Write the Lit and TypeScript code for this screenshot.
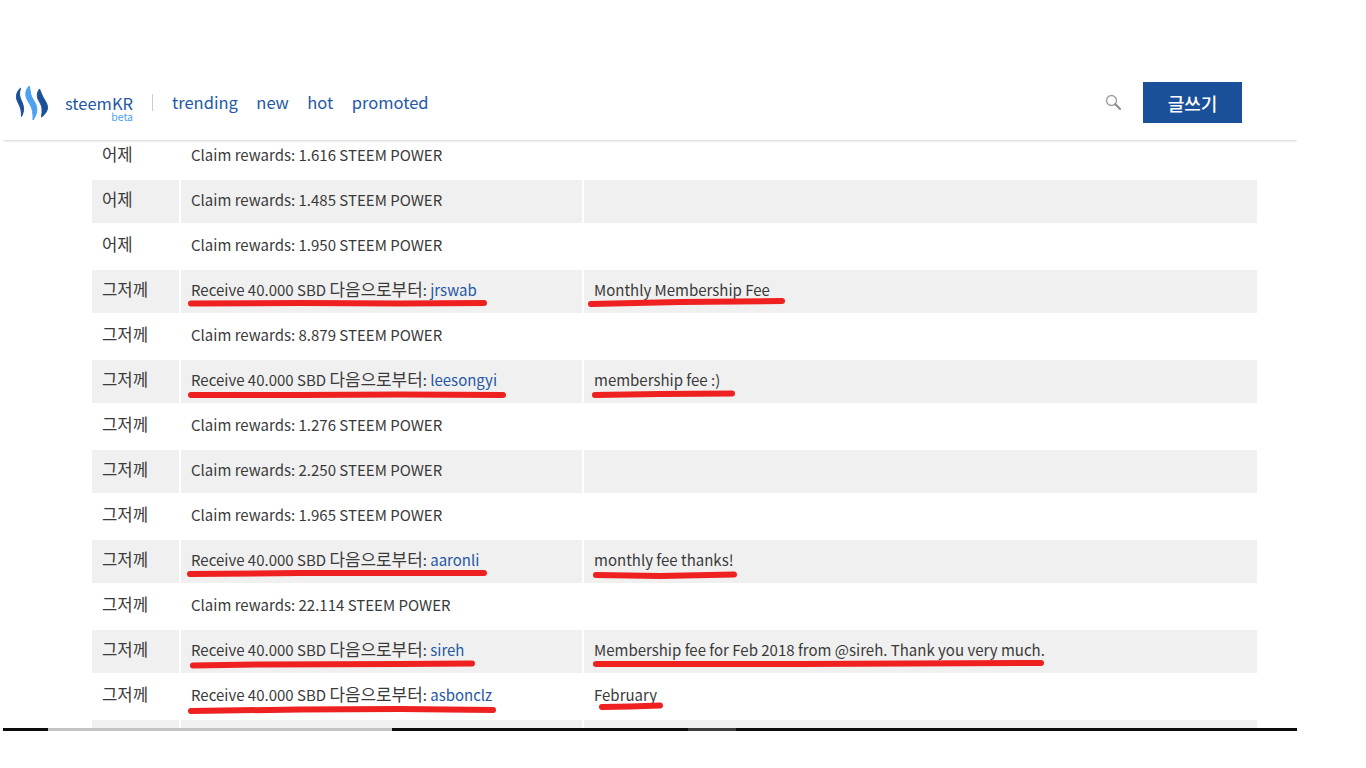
import { LitElement, html, css, svg } from "lit";
import { customElement } from "lit/decorators.js";

interface Row { date: string; kind: "claim" | "recv" | "none"; value?: string; from?: string; memo?: string; }

const claim = (value: string, date: string): Row => ({ date, kind: "claim", value });
const recv = (from: string, memo: string): Row => ({ date: "그저께", kind: "recv", from, memo });

const ROWS: Row[] = [
  claim("1.616", "어제"),
  claim("1.485", "어제"),
  claim("1.950", "어제"),
  recv("jrswab", "Monthly Membership Fee"),
  claim("8.879", "그저께"),
  recv("leesongyi", "membership fee :)"),
  claim("1.276", "그저께"),
  claim("2.250", "그저께"),
  claim("1.965", "그저께"),
  recv("aaronli", "monthly fee thanks!"),
  claim("22.114", "그저께"),
  recv("sireh", "Membership fee for Feb 2018 from @sireh. Thank you very much."),
  recv("asbonclz", "February"),
  { date: "", kind: "none" },
];

const MARKS = [
  "M191 303.5 L300 303 L400 303.5 L484 303",
  "M591 304 L680 302 L782 301",
  "M191 395 L300 395 L400 394.5 L503 395",
  "M595 395 L660 394 L732 393.5",
  "M190 574 L300 573 L400 573 L484 573",
  "M596 575 L660 576 L734 574.5",
  "M193 665.5 L260 664.5 L400 664 L472 663.5",
  "M596 664 L800 664 L1041 663",
  "M191 711 L300 709.5 L400 709 L493 710",
  "M602 707 L630 706.5 L660 705.5",
];

@customElement("app-root")
export class AppRoot extends LitElement {
  static styles = css`
    :host {
      display: block;
      position: relative;
      width: 1366px;
      height: 768px;
      overflow: hidden;
      background: #fff;
      font-family: "Noto Sans CJK KR", "Noto Sans", sans-serif;
      color: #3a3a3a;
    }
    .frame {
      margin: 75px 0 0 3px;
      width: 1294px;
      display: flex;
      flex-direction: column;
    }
    header {
      position: relative;
      z-index: 1;
      height: 65px;
      box-sizing: border-box;
      background: #fff;
      box-shadow: 0 1px 2px rgba(0, 0, 0, 0.16);
      clip-path: inset(0 0 -4px 0);
      display: flex;
      align-items: center;
      padding: 0 55px 10px 12px;
    }
    .logo { width: 34px; height: 36px; flex: none; overflow: visible; }
    .logo path { stroke-width: 1; stroke-linejoin: round; }
    .dark { fill: #1a5099; stroke: #1a5099; }
    .light { fill: #4ba2f2; stroke: #4ba2f2; }
    .brand {
      margin-left: 16px;
      margin-top: 10px;
      display: flex;
      flex-direction: column;
      align-items: flex-end;
      color: #2458a4;
      font-size: 16.5px;
      line-height: 18px;
    }
    .beta { font-size: 10.5px; line-height: 10px; color: #4ba2f2; }
    .sep { width: 1px; height: 17px; background: #ccc; margin: 0 19px; }
    nav { display: flex; gap: 18.5px; font-size: 16.5px; line-height: 24px; color: #2458a4; margin-top: -2px; }
    .spacer { flex: 1; }
    .search { width: 16px; height: 16px; margin-right: 22px; flex: none; margin-top: -1px; }
    .btn {
      width: 99px;
      height: 41px;
      background: #1a5099;
      color: #fff;
      font-size: 18px;
      font-weight: 500;
      display: flex;
      align-items: center;
      justify-content: center;
    }
    .body { height: 588px; overflow: hidden; }
    .table {
      margin: -5px 0 0 89px;
      width: 1165px;
      display: grid;
      grid-template-columns: 87px 401px 673px;
      grid-auto-rows: 43px;
      gap: 2px;
      font-size: 15px;
    }
    .cell {
      display: flex;
      align-items: center;
      padding: 0 10px 4px;
      box-sizing: border-box;
      white-space: pre;
      line-height: 24px;
      overflow: hidden;
    }
    .cell.shade { background: #f0f0f0; }
    .date { padding-bottom: 6px; font-size: 16.7px; }
    .ko { font-size: 16.9px; }
    a { color: #2458a4; text-decoration: none; }
    .scroll { height: 3px; display: flex; background: #0c0c0c; }
    .scroll i { display: block; flex: none; }
    .s1 { width: 45px; }
    .s2 { width: 344px; background: #c4c4c4; }
    .s3 { width: 296px; }
    .s4 { width: 48px; background: #3c3c3c; }
    .marks { position: absolute; left: 0; top: 0; width: 1366px; height: 768px; pointer-events: none; z-index: 2; }
    .marks path { fill: none; stroke: #ee2020; stroke-width: 6; stroke-linecap: round; stroke-linejoin: round; }
  `;

  private main(r: Row) {
    if (r.kind === "claim") return html`<span>Claim rewards: ${r.value} STEEM POWER</span>`;
    if (r.kind === "recv")
      return html`<span>Receive 40.000 SBD <span class="ko">다음으로부터</span>: <a>${r.from}</a></span>`;
    return "";
  }

  render() {
    return html`
      <div class="frame">
        <header>
          <svg class="logo" viewBox="15 85 34 36" aria-hidden="true">
            <path class="dark" d="M20.7 88 C17 91 15.5 96 17 100 C18.5 104 20.5 107 21 110 C21.3 112 21.6 114 21.5 116.5 C23.5 113 24 109 23 105 C22 101 19.5 98 19.5 94 C19.5 92 20 90 20.7 88 Z" />
            <path class="light" d="M29.3 86 C26 89 25 94 26.5 98 C28 102 31 105 32 109 C32.8 112 33.3 116 33 120 C36 116 37.5 111 36.5 106.5 C35.5 102 32 99 31 95 C30.3 92 30 89 29.3 86 Z" />
            <path class="dark" d="M39.5 89 C37 92 36.8 96 38 99 C39.5 102 41.5 105 42 108 C42.3 111 42 114 41.5 117 C45.5 114 48 110 47.5 106.5 C47 102.5 43.5 99 42 95 C41 93 40.5 91 39.5 89 Z" />
          </svg>
          <div class="brand"><span>steemKR</span><span class="beta">beta</span></div>
          <div class="sep"></div>
          <nav><span>trending</span><span>new</span><span>hot</span><span>promoted</span></nav>
          <div class="spacer"></div>
          <svg class="search" viewBox="0 0 16 16" aria-hidden="true">
            <circle cx="6.5" cy="6.5" r="5" fill="none" stroke="#a0a0a0" stroke-width="1.4" />
            <path d="M10.3 10.3 L15 15" stroke="#8a8a8a" stroke-width="2" stroke-linecap="round" />
          </svg>
          <div class="btn">글쓰기</div>
        </header>
        <div class="body">
          <div class="table">
            ${ROWS.map((r, i) => {
              const shade = i % 2 === 1 ? "shade" : "";
              return html`
                <div class="cell date ${shade}">${r.date}</div>
                <div class="cell ${shade}">${this.main(r)}</div>
                <div class="cell ${shade}">${r.memo ?? ""}</div>
              `;
            })}
          </div>
        </div>
        <div class="scroll"><i class="s1"></i><i class="s2"></i><i class="s3"></i><i class="s4"></i></div>
      </div>
      <svg class="marks" viewBox="0 0 1366 768" aria-hidden="true">
        ${MARKS.map((d) => svg`<path d=${d} />`)}
      </svg>
    `;
  }
}
